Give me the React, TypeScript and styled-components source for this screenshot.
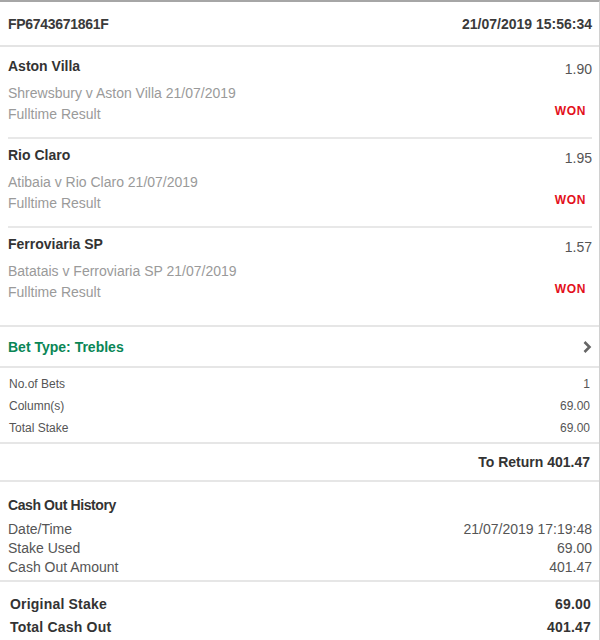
import React from 'react';
import styled, { createGlobalStyle } from 'styled-components';

const GlobalStyle = createGlobalStyle`
  html, body {
    margin: 0;
    padding: 0;
    background: #fff;
  }
  body {
    font-family: "Liberation Sans", Arial, sans-serif;
    color: #333;
  }
`;

const Slip = styled.div`
  width: 599px;
  border-top: 2px solid #a6a6a6;
  border-right: 1px solid #d0d0d0;
  background: #fff;
`;

const Header = styled.div`
  display: flex;
  justify-content: space-between;
  align-items: center;
  height: 43px;
  padding: 0 7px 0 8px;
  font-size: 14px;
  font-weight: bold;
  color: #3a3a3a;
  border-bottom: 2px solid #e4e4e4;
`;

const Ref = styled.span`
  letter-spacing: -0.3px;
`;

const Legs = styled.div`
  padding: 3px 7px 10px 8px;
  border-bottom: 2px solid #e6e6e6;
`;

const Leg = styled.div<{ $first?: boolean }>`
  display: grid;
  grid-template-columns: 1fr auto;
  padding: 6px 0 12px;
  border-top: ${({ $first }) => ($first ? 'none' : '2px solid #e8e8e8')};
`;

const TeamName = styled.div`
  font-size: 14px;
  font-weight: bold;
  line-height: 20px;
  color: #333;
`;

const Odds = styled.div`
  font-size: 14px;
  line-height: 20px;
  padding-top: 3px;
  margin-bottom: -3px;
  color: #555;
  text-align: right;
`;

const Details = styled.div`
  margin-top: 7px;
  font-size: 14px;
  line-height: 21px;
  color: #9a9a9a;
`;

const Result = styled.div`
  align-self: end;
  margin: 0 6px 7px 0;
  font-size: 12px;
  font-weight: bold;
  letter-spacing: 0.6px;
  color: #e3101b;
`;

const BetTypeRow = styled.div`
  display: flex;
  justify-content: space-between;
  align-items: center;
  height: 39px;
  padding: 0 8px;
  border-bottom: 2px solid #e6e6e6;
`;

const BetTypeLabel = styled.span`
  font-size: 14px;
  font-weight: bold;
  color: #0a8656;
`;

const Chevron = styled.svg`
  display: block;
  margin-right: -1px;
`;

const Stats = styled.div`
  padding: 5px 9px 3px 9px;
  border-bottom: 2px solid #e6e6e6;
`;

const StatRow = styled.div`
  display: flex;
  justify-content: space-between;
  font-size: 12px;
  line-height: 22px;
  color: #555;
`;

const ReturnRow = styled.div`
  display: flex;
  justify-content: flex-end;
  align-items: center;
  height: 36px;
  padding: 0 9px;
  font-size: 14px;
  font-weight: bold;
  color: #333;
  border-bottom: 2px solid #e6e6e6;
`;

const CashOutHistory = styled.div`
  padding: 13px 7px 3px 8px;
  border-bottom: 2px solid #e6e6e6;
`;

const SectionTitle = styled.div`
  font-size: 14px;
  font-weight: bold;
  line-height: 20px;
  letter-spacing: -0.4px;
  color: #333;
  margin-bottom: 5px;
`;

const HistoryRow = styled.div`
  display: flex;
  justify-content: space-between;
  font-size: 14px;
  line-height: 19px;
  color: #555;
`;

const Totals = styled.div`
  padding: 11px 8px 4px 10px;
`;

const TotalRow = styled.div`
  display: flex;
  justify-content: space-between;
  font-size: 14px;
  font-weight: bold;
  line-height: 23px;
  letter-spacing: 0.2px;
  color: #333;
`;

const legs = [
  { team: 'Aston Villa', odds: '1.90', match: 'Shrewsbury v Aston Villa 21/07/2019' },
  { team: 'Rio Claro', odds: '1.95', match: 'Atibaia v Rio Claro 21/07/2019' },
  { team: 'Ferroviaria SP', odds: '1.57', match: 'Batatais v Ferroviaria SP 21/07/2019' },
];

export default function App() {
  return (
    <>
      <GlobalStyle />
      <Slip>
        <Header>
          <Ref>FP6743671861F</Ref>
          <span>21/07/2019 15:56:34</span>
        </Header>

        <Legs>
          {legs.map((leg, i) => (
            <Leg key={leg.team} $first={i === 0}>
              <TeamName>{leg.team}</TeamName>
              <Odds>{leg.odds}</Odds>
              <Details>
                <div>{leg.match}</div>
                <div>Fulltime Result</div>
              </Details>
              <Result>WON</Result>
            </Leg>
          ))}
        </Legs>

        <BetTypeRow>
          <BetTypeLabel>Bet Type: Trebles</BetTypeLabel>
          <Chevron width="10" height="14" viewBox="0 0 10 14">
            <path d="M2.5 2 L7.5 7 L2.5 12" fill="none" stroke="#666" strokeWidth="2.6" />
          </Chevron>
        </BetTypeRow>

        <Stats>
          <StatRow>
            <span>No.of Bets</span>
            <span>1</span>
          </StatRow>
          <StatRow>
            <span>Column(s)</span>
            <span>69.00</span>
          </StatRow>
          <StatRow>
            <span>Total Stake</span>
            <span>69.00</span>
          </StatRow>
        </Stats>

        <ReturnRow>To Return 401.47</ReturnRow>

        <CashOutHistory>
          <SectionTitle>Cash Out History</SectionTitle>
          <HistoryRow>
            <span>Date/Time</span>
            <span>21/07/2019 17:19:48</span>
          </HistoryRow>
          <HistoryRow>
            <span>Stake Used</span>
            <span>69.00</span>
          </HistoryRow>
          <HistoryRow>
            <span>Cash Out Amount</span>
            <span>401.47</span>
          </HistoryRow>
        </CashOutHistory>

        <Totals>
          <TotalRow>
            <span>Original Stake</span>
            <span>69.00</span>
          </TotalRow>
          <TotalRow>
            <span>Total Cash Out</span>
            <span>401.47</span>
          </TotalRow>
        </Totals>
      </Slip>
    </>
  );
}
